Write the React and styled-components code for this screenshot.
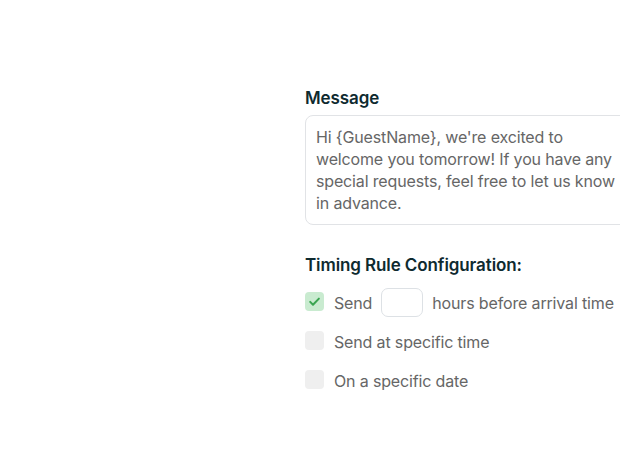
import React from 'react'
import styled, { createGlobalStyle } from 'styled-components'

const GlobalStyle = createGlobalStyle`
  html, body {
    margin: 0;
    padding: 0;
    background: #ffffff;
    overflow: hidden;
  }
  body {
    font-family: Inter, "Noto Sans", sans-serif;
    -webkit-font-smoothing: antialiased;
  }
`

const Page = styled.div`
  width: 620px;
  height: 474px;
  display: grid;
  grid-template-columns: 305px 1fr;
  overflow: hidden;
`

const Panel = styled.div`
  padding-top: 86px;
  display: flex;
  flex-direction: column;
  min-width: 0;
`

const Heading = styled.h3`
  margin: 0;
  font-size: 17px;
  line-height: 24px;
  font-weight: 600;
  color: #0e2a2f;
  letter-spacing: -0.1px;
`

const MessageBox = styled.div`
  margin-top: 5px;
  width: 330px;
  box-sizing: border-box;
  padding: 10px;
  border: 1px solid #e1e3e6;
  border-radius: 8px;
  font-size: 16px;
  line-height: 22px;
  letter-spacing: -0.15px;
  color: #666666;
`

const Section = styled.div`
  margin-top: 28px;
  display: flex;
  flex-direction: column;
`

const Rules = styled.div`
  margin-top: 11px;
  display: flex;
  flex-direction: column;
  gap: 10px;
`

const Row = styled.label`
  display: flex;
  align-items: center;
  gap: 10px;
  height: 29px;
  font-size: 16px;
  letter-spacing: -0.15px;
  color: #666666;
`

const Box = styled.span`
  width: 19px;
  height: 19px;
  border-radius: 4px;
  flex: none;
  display: flex;
  align-items: center;
  justify-content: center;
  background: ${p => (p.checked ? '#c9ebd0' : '#efefef')};
  margin-top: -2px;
`

const Label = styled.span`
  display: flex;
  align-items: center;
  gap: 9px;
  white-space: nowrap;
`

const HoursInput = styled.span`
  width: 42px;
  height: 29px;
  box-sizing: border-box;
  border: 1px solid #dde1e5;
  border-radius: 7px;
  background: #fff;
`

function CheckIcon() {
  return (
    <svg width="13" height="13" viewBox="0 0 13 13" fill="none">
      <path d="M2.2 6.9 L5 9.7 L10.9 3.6" stroke="#3aa551" strokeWidth="2" strokeLinecap="round" strokeLinejoin="round" />
    </svg>
  )
}

const rules = [
  { id: 'before', checked: true },
  { id: 'time', checked: false, text: 'Send at specific time' },
  { id: 'date', checked: false, text: 'On a specific date' }
]

export default function App() {
  return (
    <>
      <GlobalStyle />
      <Page>
        <div />
        <Panel>
          <Heading>Message</Heading>
          <MessageBox>
            Hi {'{GuestName}'}, we're excited to welcome you tomorrow! If you have any special requests, feel free to let us know in advance.
          </MessageBox>
          <Section>
            <Heading>Timing Rule Configuration:</Heading>
            <Rules>
              {rules.map((rule) => (
                <Row key={rule.id}>
                  <Box checked={rule.checked}>{rule.checked && <CheckIcon />}</Box>
                  {rule.id === 'before' ? (
                    <Label>
                      Send <HoursInput /> hours before arrival time
                    </Label>
                  ) : (
                    <Label>{rule.text}</Label>
                  )}
                </Row>
              ))}
            </Rules>
          </Section>
        </Panel>
      </Page>
    </>
  )
}
